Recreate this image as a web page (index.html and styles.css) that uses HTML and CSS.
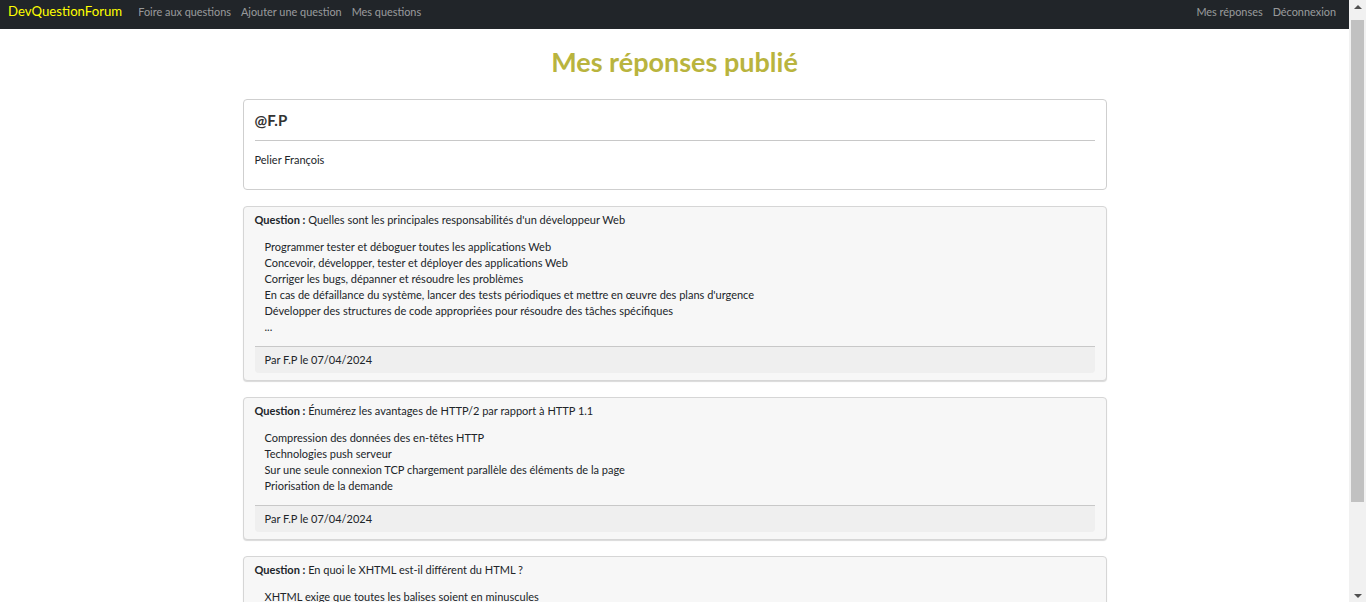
FILE: index.html
```html
<!DOCTYPE html>
<html lang="fr">
<head>
<meta charset="utf-8">
<title>Mes réponses</title>
<link rel="stylesheet" href="styles.css">
</head>
<body>
<nav class="navbar">
  <div class="nav-left">
    <a class="brand" href="#">DevQuestionForum</a>
    <a class="nav-link" href="#">Foire aux questions</a>
    <a class="nav-link" href="#">Ajouter une question</a>
    <a class="nav-link" href="#">Mes questions</a>
  </div>
  <div class="nav-right">
    <a class="nav-link" href="#">Mes réponses</a>
    <a class="nav-link" href="#">Déconnexion</a>
  </div>
</nav>
<main class="container">
  <h1 class="title">Mes réponses publié</h1>
  <section class="profile">
    <h2 class="pseudo">@F.P</h2>
    <hr class="sep">
    <p class="fullname">Pelier François</p>
  </section>

  <article class="answer">
    <p class="question"><strong>Question :</strong> Quelles sont les principales responsabilités d'un développeur Web</p>
    <div class="body">
      <p>Programmer tester et déboguer toutes les applications Web</p>
      <p>Concevoir, développer, tester et déployer des applications Web</p>
      <p>Corriger les bugs, dépanner et résoudre les problèmes</p>
      <p>En cas de défaillance du système, lancer des tests périodiques et mettre en œuvre des plans d'urgence</p>
      <p>Développer des structures de code appropriées pour résoudre des tâches spécifiques</p>
      <p>...</p>
    </div>
    <div class="footer">Par F.P le 07/04/2024</div>
  </article>

  <article class="answer">
    <p class="question"><strong>Question :</strong> Énumérez les avantages de HTTP/2 par rapport à HTTP 1.1</p>
    <div class="body">
      <p>Compression des données des en-têtes HTTP</p>
      <p>Technologies push serveur</p>
      <p>Sur une seule connexion TCP chargement parallèle des éléments de la page</p>
      <p>Priorisation de la demande</p>
    </div>
    <div class="footer">Par F.P le 07/04/2024</div>
  </article>

  <article class="answer">
    <p class="question"><strong>Question :</strong> En quoi le XHTML est-il différent du HTML ?</p>
    <div class="body">
      <p>XHTML exige que toutes les balises soient en minuscules</p>
      <p>XHTML exige que toutes les balises soient fermées</p>
      <p>XHTML exige que les attributs soient entre guillemets</p>
    </div>
    <div class="footer">Par F.P le 07/04/2024</div>
  </article>
</main>
<div class="fake-scrollbar" aria-hidden="true">
  <span class="arrow up"></span>
  <span class="thumb"></span>
  <span class="arrow down"></span>
</div>
</body>
</html>
```
FILE: styles.css
```css
body {
  margin: 0 17px 0 0;
  font-family: Lato, "Open Sans", sans-serif;
  font-size: 11px;
  color: #212529;
  background: #fff;
}

.navbar {
  height: 29px;
  background: #212529;
  display: flex;
  justify-content: space-between;
  align-items: center;
  padding: 0 13px 7px 8px;
  box-sizing: border-box;
}
.nav-left, .nav-right { display: flex; align-items: center; gap: 10px; }
.navbar a { text-decoration: none; font-size: 10.9px; }
.brand { color: #ffff00; font-size: 13.2px !important; margin-right: 6px; }
.nav-link { color: rgba(255,255,255,0.55); }

.container {
  width: 864px;
  margin: 0 auto;
  padding-top: 16px;
}

.title {
  margin: 0 0 20px;
  text-align: center;
  font-size: 27px;
  font-weight: 700;
  color: #b9b43e;
  line-height: 34px;
}

.profile {
  border: 1px solid #cfcfcf;
  border-radius: 4px;
  padding: 10px 11px 21px;
  margin-bottom: 16px;
}
.pseudo { margin: 0; font-size: 15px; font-weight: 700; line-height: 20px; color: #333; }
.sep { border: 0; border-top: 1px solid #c8c8c8; margin: 10px 0 11px; }
.fullname { margin: 0; line-height: 16px; }

.answer {
  background: #f7f7f7;
  border: 1px solid #d6d6d6;
  border-radius: 4px;
  box-shadow: 0 1px 1px rgba(0,0,0,0.15);
  padding: 5px 11px 7px;
  margin-bottom: 16px;
}
.question { margin: 0; line-height: 16px; }
.question strong { font-weight: 700; }
.body { padding: 11px 10px 11px; }
.body p { margin: 0; line-height: 16px; }
.footer {
  border-top: 1px solid #c8c8c8;
  background: #efefef;
  border-radius: 0 0 4px 4px;
  padding: 0 10px;
  line-height: 26px;
}

.fake-scrollbar {
  position: fixed;
  top: 0;
  right: 0;
  width: 17px;
  height: 100%;
  background: #f1f1f1;
}
.fake-scrollbar .thumb {
  position: absolute;
  left: 2px;
  right: 2px;
  top: 20px;
  height: 482px;
  background: #c1c1c1;
}
.fake-scrollbar .arrow {
  position: absolute;
  left: 5px;
  width: 0;
  height: 0;
  border-left: 4px solid transparent;
  border-right: 4px solid transparent;
}
.fake-scrollbar .up { top: 5px; border-bottom: 4px solid #505050; }
.fake-scrollbar .down { bottom: 4px; border-top: 4px solid #505050; }
```
